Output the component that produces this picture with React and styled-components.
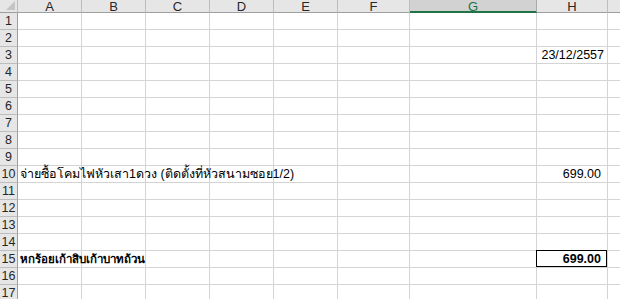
import styled, { createGlobalStyle } from "styled-components";

const GlobalStyle = createGlobalStyle`
  html, body {
    margin: 0;
    padding: 0;
    background: #ffffff;
    overflow: hidden;
  }
`;

const COLS = ["A", "B", "C", "D", "E", "F", "G", "H", ""];
const ROW_COUNT = 17;

const Sheet = styled.div`
  display: grid;
  grid-template-columns: 18px 64px 64px 64px 64px 64px 72px 127px 71px 20px;
  grid-template-rows: 13px repeat(${ROW_COUNT}, 17px);
  width: 620px;
  height: 299px;
  overflow: hidden;
  font-family: "Liberation Sans", Arial, "Noto Sans", sans-serif;
  font-size: 12.5px;
  color: #000;
`;

const Corner = styled.div`
  position: relative;
  background: #e6e6e6;
  border-right: 1px solid #bdbdbd;
  border-bottom: 1px solid #9e9e9e;
  box-sizing: border-box;
`;

const CornerMark = styled.div`
  position: absolute;
  right: 2px;
  bottom: 2px;
  width: 0;
  height: 0;
  border-left: 9px solid transparent;
  border-bottom: 9px solid #c4c4c4;
`;

const ColHead = styled.div`
  display: flex;
  align-items: flex-start;
  justify-content: center;
  box-sizing: border-box;
  background: ${(p) => (p.$active ? "#d2d2d2" : "#e6e6e6")};
  color: ${(p) => (p.$active ? "#217346" : "#262626")};
  border-right: 1px solid ${(p) => (p.$active ? "#a9a9a9" : "#bdbdbd")};
  border-bottom: ${(p) => (p.$active ? "2px solid #217346" : "1px solid #9e9e9e")};
  font-size: 13px;
  line-height: 11px;
  padding-top: 1px;
`;

const RowHead = styled.div`
  display: flex;
  align-items: flex-end;
  justify-content: center;
  box-sizing: border-box;
  background: #e6e6e6;
  color: #262626;
  border-right: 1px solid #9e9e9e;
  border-bottom: 1px solid #bdbdbd;
  font-size: 12.5px;
  line-height: 15px;
`;

const Cell = styled.div`
  position: relative;
  box-sizing: border-box;
  border-right: 1px solid #d4d4d4;
  border-bottom: 1px solid #d4d4d4;
  background: #fff;
  overflow: visible;
  white-space: nowrap;
  display: flex;
  align-items: flex-end;
  justify-content: ${(p) => (p.$right ? "flex-end" : "flex-start")};
  padding: 0 ${(p) => (p.$num ? "6px" : "3px")} 1px 2px;
  line-height: 14px;
  font-weight: ${(p) => (p.$bold ? "bold" : "normal")};
  z-index: ${(p) => (p.$spill ? 2 : 1)};
`;

const Spill = styled.span`
  position: absolute;
  left: 2px;
  bottom: 1px;
  font-size: ${(p) => (p.$bold ? "11.5px" : "12.5px")};
`;

const Boxed = styled.div`
  position: absolute;
  left: -1px;
  top: -1px;
  right: 0;
  bottom: 0;
  border: 1px solid #000;
  box-sizing: border-box;
  pointer-events: none;
`;

const content = {
  "3-8": { text: "23/12/2557", right: true },
  "10-1": { text: "จ่ายซื้อโคมไฟหัวเสา1ดวง (ติดตั้งที่หัวสนามซอย1/2)", spill: true },
  "10-8": { text: "699.00", right: true, num: true },
  "15-1": { text: "หกร้อยเก้าสิบเก้าบาทถ้วน", spill: true, bold: true },
  "15-8": { text: "699.00", right: true, num: true, bold: true, boxed: true },
};

function App() {
  const rows = Array.from({ length: ROW_COUNT }, (_, i) => i + 1);
  return (
    <>
      <GlobalStyle />
      <Sheet>
        <Corner>
          <CornerMark />
        </Corner>
        {COLS.map((c, i) => (
          <ColHead key={"h" + i} $active={c === "G"}>
            {c}
          </ColHead>
        ))}
        {rows.map((r) => [
          <RowHead key={"r" + r}>{r}</RowHead>,
          ...COLS.map((c, ci) => {
            const item = content[`${r}-${ci + 1}`];
            if (!item) return <Cell key={`${r}-${ci}`} />;
            return (
              <Cell
                key={`${r}-${ci}`}
                $right={item.right}
                $num={item.num}
                $bold={item.bold}
                $spill={item.spill}
              >
                {item.spill ? <Spill $bold={item.bold}>{item.text}</Spill> : item.text}
                {item.boxed && <Boxed />}
              </Cell>
            );
          }),
        ])}
      </Sheet>
    </>
  );
}

export default App;
